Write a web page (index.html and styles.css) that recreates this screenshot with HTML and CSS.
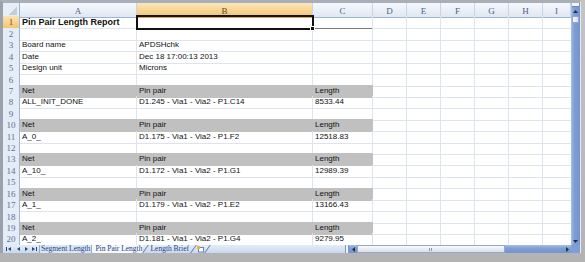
FILE: index.html
```html
<!DOCTYPE html>
<html>
  <head>
    <meta charset="utf-8">
    <link rel="stylesheet" href="styles.css">
  </head>
  <body>
    <div class="window">
      <div class="main">
        <div class="sheet">
          <div class="colhead">
            <div class="corner"></div>
            <div class="ch">A</div>
            <div class="ch sel">B</div>
            <div class="ch">C</div>
            <div class="ch">D</div>
            <div class="ch">E</div>
            <div class="ch">F</div>
            <div class="ch">G</div>
            <div class="ch">H</div>
            <div class="ch">I</div>
          </div>

          <div class="row first">
            <div class="rh sel">1</div>
            <div class="c title">Pin Pair Length Report</div>
            <div class="c active"></div>
            <div class="c under"></div>
            <div class="rest"></div>
          </div>
          <div class="row"><div class="rh">2</div><div class="c"></div><div class="c"></div><div class="c"></div><div class="rest"></div></div>
          <div class="row"><div class="rh">3</div><div class="c">Board name</div><div class="c">APDSHchk</div><div class="c"></div><div class="rest"></div></div>
          <div class="row"><div class="rh">4</div><div class="c">Date</div><div class="c">Dec 18 17:00:13 2013</div><div class="c"></div><div class="rest"></div></div>
          <div class="row"><div class="rh">5</div><div class="c">Design unit</div><div class="c">Microns</div><div class="c"></div><div class="rest"></div></div>
          <div class="row"><div class="rh">6</div><div class="c"></div><div class="c"></div><div class="c"></div><div class="rest"></div></div>

          <div class="row hd"><div class="rh">7</div><div class="c">Net</div><div class="c">Pin pair</div><div class="c">Length</div><div class="rest"></div></div>
          <div class="row"><div class="rh">8</div><div class="c">ALL_INIT_DONE</div><div class="c">D1.245 - Via1 - Via2 - P1.C14</div><div class="c">8533.44</div><div class="rest"></div></div>
          <div class="row"><div class="rh">9</div><div class="c"></div><div class="c"></div><div class="c"></div><div class="rest"></div></div>

          <div class="row hd"><div class="rh">10</div><div class="c">Net</div><div class="c">Pin pair</div><div class="c">Length</div><div class="rest"></div></div>
          <div class="row"><div class="rh">11</div><div class="c">A_0_</div><div class="c">D1.175 - Via1 - Via2 - P1.F2</div><div class="c">12518.83</div><div class="rest"></div></div>
          <div class="row"><div class="rh">12</div><div class="c"></div><div class="c"></div><div class="c"></div><div class="rest"></div></div>

          <div class="row hd"><div class="rh">13</div><div class="c">Net</div><div class="c">Pin pair</div><div class="c">Length</div><div class="rest"></div></div>
          <div class="row"><div class="rh">14</div><div class="c">A_10_</div><div class="c">D1.172 - Via1 - Via2 - P1.G1</div><div class="c">12989.39</div><div class="rest"></div></div>
          <div class="row"><div class="rh">15</div><div class="c"></div><div class="c"></div><div class="c"></div><div class="rest"></div></div>

          <div class="row hd"><div class="rh">16</div><div class="c">Net</div><div class="c">Pin pair</div><div class="c">Length</div><div class="rest"></div></div>
          <div class="row"><div class="rh">17</div><div class="c">A_1_</div><div class="c">D1.179 - Via1 - Via2 - P1.E2</div><div class="c">13166.43</div><div class="rest"></div></div>
          <div class="row"><div class="rh">18</div><div class="c"></div><div class="c"></div><div class="c"></div><div class="rest"></div></div>

          <div class="row hd"><div class="rh">19</div><div class="c">Net</div><div class="c">Pin pair</div><div class="c">Length</div><div class="rest"></div></div>
          <div class="row"><div class="rh">20</div><div class="c">A_2_</div><div class="c">D1.181 - Via1 - Via2 - P1.G4</div><div class="c">9279.95</div><div class="rest"></div></div>
        </div>

        <div class="vscroll">
          <div class="vs-split"></div>
          <div class="vs-btn">
            <svg width="5" height="3" viewBox="0 0 5 3"><polygon points="0,3 5,3 2.5,0" fill="#1d2f55"/></svg>
          </div>
          <div class="vs-thumb"></div>
          <div class="vs-track"></div>
          <div class="vs-btn">
            <svg width="5" height="3" viewBox="0 0 5 3"><polygon points="0,0 5,0 2.5,3" fill="#1d2f55"/></svg>
          </div>
        </div>
      </div>

      <div class="tabbar">
        <div class="nav">
          <svg width="35" height="8" viewBox="0 0 35 8">
            <rect x="3" y="2" width="1" height="4" fill="#27457e"/>
            <polygon points="8,2 8,6 5,4" fill="#27457e"/>
            <polygon points="17,2 17,6 14,4" fill="#27457e"/>
            <polygon points="22,2 22,6 25,4" fill="#27457e"/>
            <polygon points="29,2 29,6 32,4" fill="#27457e"/>
            <rect x="33" y="2" width="1" height="4" fill="#27457e"/>
          </svg>
        </div>
        <div class="tabs">
          <div class="tab boxed">Segment Length</div>
          <div class="tab on">Pin Pair Length</div>
          <div class="slash"></div>
          <div class="tab">Length Brief</div>
          <div class="slash"></div>
          <div class="newsheet">
            <svg width="8" height="7" viewBox="0 0 8 7">
              <rect x="1.5" y="1.5" width="5" height="4.5" fill="#fff" stroke="#6d86b5"/>
              <rect x="0" y="0" width="3" height="3" fill="#f0b23c"/>
            </svg>
          </div>
          <div class="slash"></div>
        </div>
        <div class="splitbar"></div>
        <div class="hscroll">
          <div class="hs-btn">
            <svg width="3" height="5" viewBox="0 0 3 5"><polygon points="3,0 3,5 0,2.5" fill="#1d2f55"/></svg>
          </div>
          <div class="hs-thumb"><span class="grip"></span></div>
          <div class="hs-track"></div>
          <div class="hs-btn">
            <svg width="3" height="5" viewBox="0 0 3 5"><polygon points="0,0 0,5 3,2.5" fill="#1d2f55"/></svg>
          </div>
        </div>
        <div class="corner-box"></div>
      </div>
    </div>
  </body>
</html>
```

FILE: styles.css
```css
body {
  margin: 0;
  width: 585px;
  height: 262px;
  overflow: hidden;
  background: linear-gradient(#c4c4c4, #b3b3b3);
  font-family: "Liberation Sans", Arial, sans-serif;
}

.window {
  width: 581px;
  height: 253px;
  box-sizing: border-box;
  border-top: 3px solid #a9afb8;
  border-left: 3px solid #9aa1ab;
  border-right: 1px solid #e4eaf3;
  background: #fff;
  display: flex;
  flex-direction: column;
}
.main {
  display: flex;
  height: 242px;
}
.sheet {
  width: 568px;
  overflow: hidden;
}

/* column letters */
.colhead {
  display: grid;
  grid-template-columns: 17px 117px 176px 60px repeat(5, 34px) 28px;
  height: 13px;
}
.corner {
  background: linear-gradient(to bottom right, transparent 50%, #c3cddb 50%) right 2px bottom 2px / 9px 8px no-repeat, #e8eef7;
  border-right: 1px solid #9eb6ce;
  border-bottom: 1px solid #9eb6ce;
}
.ch {
  background: linear-gradient(#f6f9fd, #dfe7f2);
  border-right: 1px solid #c7d4e5;
  border-bottom: 1px solid #9eb6ce;
  font: 9px "Liberation Serif", serif;
  color: #4e6283;
  text-align: center;
  line-height: 12px;
  padding-top: 2px;
  box-sizing: border-box;
}
.ch.sel {
  background: linear-gradient(#fce6bb, #f3c46f);
  border-bottom-color: #dba24a;
  color: #5d4a26;
}

/* sheet rows */
.row {
  display: grid;
  grid-template-columns: 17px 117px 176px 60px 198px;
  height: 11.42px;
}
.row.first {
  height: 12px;
}
.rh {
  background: #e4ecf7;
  border-right: 1px solid #9eb6ce;
  border-bottom: 1px solid #c9d6e6;
  font: 9px "Liberation Serif", serif;
  color: #5d7090;
  text-align: center;
  line-height: 12px;
}
.rh.sel {
  background: linear-gradient(#fce2b0, #f3c672);
  color: #6b5428;
}
.c {
  border-right: 1px solid #dde4ee;
  border-bottom: 1px solid #dde4ee;
  font-size: 8px;
  line-height: 10px;
  padding: 1px 0 0 2px;
  box-sizing: border-box;
  white-space: nowrap;
  overflow: hidden;
  color: #111;
}
.c.title {
  font-weight: bold;
  font-size: 9px;
  line-height: 11px;
}
.c.active {
  position: relative;
  overflow: visible;
  outline: 2px solid #111;
  outline-offset: -1px;
  z-index: 1;
}
.c.active::after {
  content: "";
  position: absolute;
  right: -3px;
  bottom: -3px;
  width: 3px;
  height: 3px;
  background: #111;
  border: 1px solid #fff;
}
.c.under {
  border-bottom-color: #7a7a7a;
}
.rest {
  border-bottom: 1px solid #dde4ee;
  background: repeating-linear-gradient(to right, transparent 0 33px, #dde4ee 33px 34px);
}
.hd .c {
  background: #c0c0c0;
  border-color: #c0c0c0;
}

/* vertical scrollbar */
.vscroll {
  width: 9px;
  display: flex;
  flex-direction: column;
  background: linear-gradient(to right, #a9bfe3, #7f9ed4 35%, #7394cd);
}
.vs-split {
  height: 3px;
  margin: 0 1px;
  background: #f2f5fa;
  border-bottom: 1px solid #6a86b8;
}
.vs-btn {
  height: 8px;
  display: flex;
  align-items: center;
  justify-content: center;
}
.vs-thumb {
  height: 5px;
  margin: 1px 1px;
  background: linear-gradient(to right, #fbfcfe, #d4deec);
  border: 1px solid #8ea6cf;
}
.vs-track {
  flex: 1;
}

/* sheet tabs + horizontal scrollbar */
.tabbar {
  height: 8px;
  display: flex;
  background: linear-gradient(#e3ecf8, #c9d8ee);
  font: 7.5px "Liberation Serif", serif;
  color: #23418a;
  line-height: 8px;
}
.nav {
  width: 35px;
  display: flex;
}
.tabs {
  width: 307px;
  display: flex;
  align-items: stretch;
}
.tab {
  padding: 0 2px;
  white-space: nowrap;
}
.tab.boxed {
  margin-left: 1px;
  box-sizing: border-box;
  border-left: 1px solid #95acd2;
  border-right: 1px solid #95acd2;
  background: #dae5f4;
  padding: 0 1px;
}
.tab.on {
  background: #f4f7fc;
  padding: 0 1px 0 3px;
}
.slash {
  width: 1px;
  margin: 0 2px;
  background: #5a76a8;
  transform: skewX(-35deg);
}
.newsheet {
  display: flex;
  align-items: center;
  padding-left: 1px;
}
.splitbar {
  width: 2px;
  background: #eef2f8;
  border-left: 1px solid #7f96bf;
  border-right: 1px solid #7f96bf;
}
.hscroll {
  width: 222px;
  display: flex;
  background: linear-gradient(#a9bfe3, #7f9ed4 40%, #7394cd);
}
.hs-btn {
  width: 8px;
  display: flex;
  align-items: center;
  justify-content: center;
}
.hs-thumb {
  width: 148px;
  box-sizing: border-box;
  border: 1px solid #93a8cb;
  background: linear-gradient(#fafbfd, #d8dfea);
  display: flex;
  align-items: center;
  justify-content: center;
}
.grip {
  width: 4px;
  height: 3px;
  background: repeating-linear-gradient(to right, #8a99b3 0 1px, transparent 1px 2px);
}
.hs-track {
  flex: 1;
}
.corner-box {
  width: 9px;
  background: #7f9ed4;
}
```
